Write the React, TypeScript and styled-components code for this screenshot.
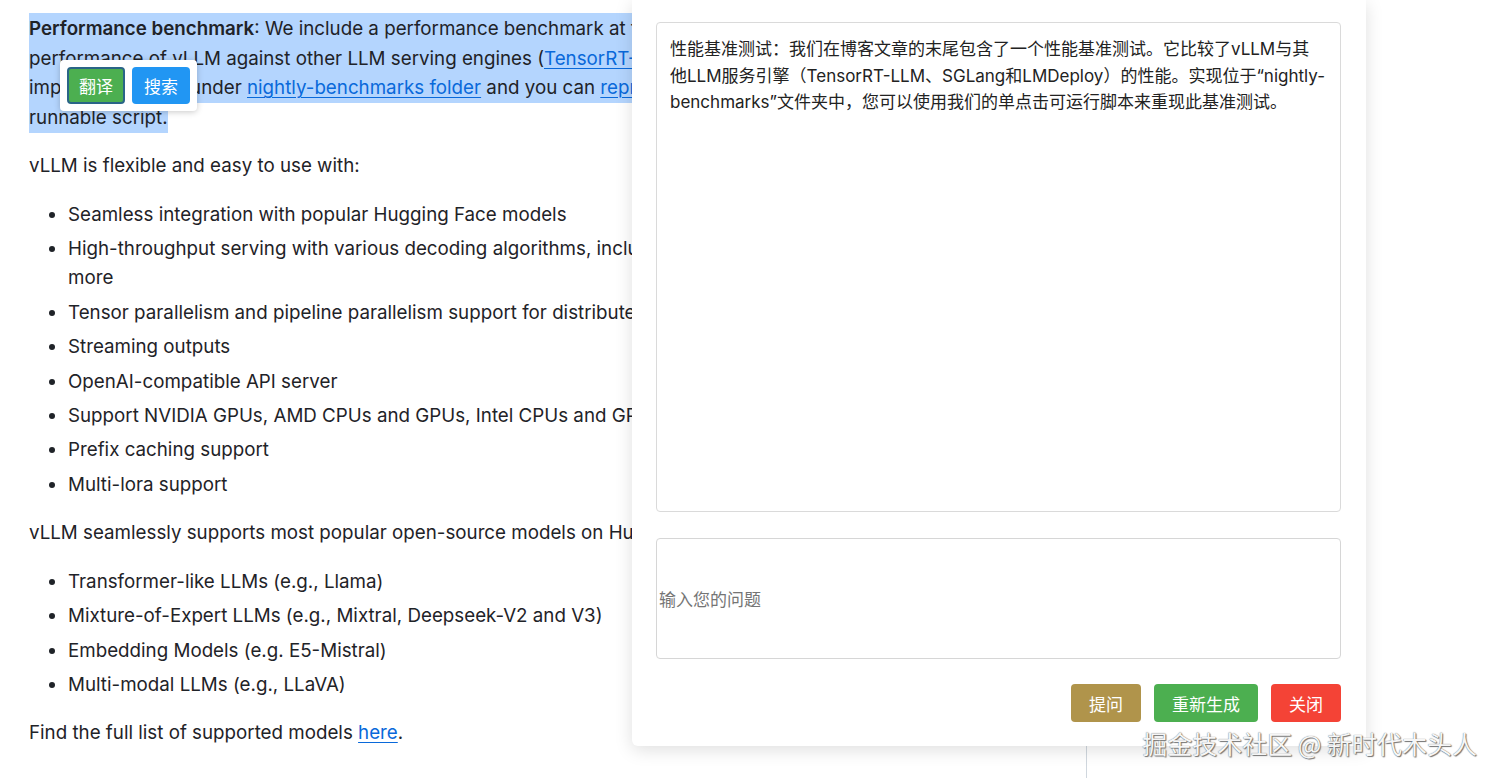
import React from "react";
import styled, { createGlobalStyle } from "styled-components";

const GlobalStyle = createGlobalStyle`
    html, body {
        margin: 0;
        padding: 0;
        background: #ffffff;
    }
    body {
        font-family: Inter, "Noto Sans CJK SC", sans-serif;
        color: #1f2328;
    }
`;

const Page = styled.div`
    display: flex;
    width: 1500px;
    height: 778px;
    overflow: hidden;
    position: relative;
`;

const Article = styled.main`
    box-sizing: border-box;
    width: 1087px;
    height: 778px;
    padding: 14px 0 0 29px;
    border-right: 1px solid #d0d7de;
    overflow: hidden;
    font-size: 18.75px;
    line-height: 29.5px;
    white-space: nowrap;
`;

const Para = styled.p`
    margin: 0 0 19px;
`;

const Selected = styled.span`
    background: #b4d5fe;
    padding: 4px 0;
`;

const Strong = styled.strong`
    font-weight: 600;
`;

const Link = styled.a`
    color: #0969da;
    text-decoration: underline;
    text-underline-offset: 3px;
    text-decoration-thickness: 1px;
`;

const List = styled.ul`
    margin: 0 0 19px;
    padding-left: 39px;
`;

const Item = styled.li`
    & + & {
        margin-top: 4.9px;
    }
`;

const SelectionPopup = styled.div`
    position: absolute;
    left: 60px;
    top: 60px;
    display: flex;
    gap: 7px;
    padding: 7px;
    background: #ffffff;
    border-radius: 4px;
    box-shadow: 0 1px 6px rgba(0, 0, 0, 0.22);
`;

const PopupButton = styled.button<{ $color: string; $focused?: boolean }>`
    box-sizing: border-box;
    width: 58px;
    height: 37px;
    border-radius: 4px;
    border: ${p => (p.$focused ? "2px solid #2a6587" : "none")};
    background: ${p => p.$color};
    color: #ffffff;
    font-family: "Noto Sans CJK SC", sans-serif;
    font-size: 17px;
    cursor: pointer;
`;

const Panel = styled.section`
    position: absolute;
    left: 632px;
    top: 0;
    box-sizing: border-box;
    width: 734px;
    padding: 22px 25px 24px 24px;
    background: #ffffff;
    border-radius: 0 0 6px 6px;
    box-shadow: 0 4px 18px rgba(0, 0, 0, 0.13);
    display: flex;
    flex-direction: column;
`;

const Answer = styled.div`
    box-sizing: border-box;
    height: 490px;
    padding: 13px 13px;
    border: 1px solid #dadada;
    border-radius: 4px;
    font-family: Inter, "Noto Sans CJK SC", sans-serif;
    font-size: 17px;
    line-height: 26.5px;
    color: #222222;
    white-space: nowrap;
`;

const Question = styled.input`
    box-sizing: border-box;
    margin-top: 26px;
    height: 121px;
    padding: 0 2px;
    border: 1px solid #d6d6d6;
    border-radius: 4px;
    font-family: "Noto Sans CJK SC", sans-serif;
    font-size: 17px;
    color: #222222;
    outline: none;
    &::placeholder {
        color: #757575;
    }
`;

const Actions = styled.div`
    margin-top: 25px;
    display: flex;
    justify-content: flex-end;
    gap: 13px;
`;

const ActionButton = styled.button<{ $color: string }>`
    height: 38px;
    padding: 0 18px;
    border: none;
    border-radius: 4px;
    background: ${p => p.$color};
    color: #ffffff;
    font-family: "Noto Sans CJK SC", sans-serif;
    font-size: 17px;
    cursor: pointer;
`;

const Watermark = styled.div`
    position: absolute;
    right: 23px;
    bottom: 22px;
    font-family: "Noto Sans CJK SC", sans-serif;
    font-size: 25px;
    line-height: 1;
    color: #f6f6f6;
    text-shadow: 0 0 1px #555, 1px 1px 1px #777;
    pointer-events: none;
`;

export default function App() {
    return (
        <>
            <GlobalStyle />
            <Page>
                <Article>
                    <Para>
                        <Selected>
                            <Strong>Performance benchmark</Strong>: We include a performance benchmark at the end of{" "}
                            <Link>our blog post</Link>. It compares the
                            <br />
                            performance of vLLM against other LLM serving engines (<Link>TensorRT-LLM</Link>,{" "}
                            <Link>SGLang</Link> and <Link>LMDeploy</Link>). The
                            <br />
                            implementation is under <Link>nightly-benchmarks folder</Link> and you can{" "}
                            <Link>reproduce</Link> this benchmark using our one-click
                            <br />
                            runnable script.
                        </Selected>
                    </Para>
                    <Para>vLLM is flexible and easy to use with:</Para>
                    <List>
                        <Item>Seamless integration with popular Hugging Face models</Item>
                        <Item>
                            High-throughput serving with various decoding algorithms, including <i>parallel sampling</i>,{" "}
                            <i>beam search</i>, and
                            <br />
                            more
                        </Item>
                        <Item>Tensor parallelism and pipeline parallelism support for distributed inference</Item>
                        <Item>Streaming outputs</Item>
                        <Item>OpenAI-compatible API server</Item>
                        <Item>Support NVIDIA GPUs, AMD CPUs and GPUs, Intel CPUs and GPUs, PowerPC CPUs, TPU, and AWS Neuron.</Item>
                        <Item>Prefix caching support</Item>
                        <Item>Multi-lora support</Item>
                    </List>
                    <Para>vLLM seamlessly supports most popular open-source models on HuggingFace, including:</Para>
                    <List>
                        <Item>Transformer-like LLMs (e.g., Llama)</Item>
                        <Item>Mixture-of-Expert LLMs (e.g., Mixtral, Deepseek-V2 and V3)</Item>
                        <Item>Embedding Models (e.g. E5-Mistral)</Item>
                        <Item>Multi-modal LLMs (e.g., LLaVA)</Item>
                    </List>
                    <Para>
                        Find the full list of supported models <Link>here</Link>.
                    </Para>
                </Article>

                <SelectionPopup>
                    <PopupButton $color="#4caf50" $focused>翻译</PopupButton>
                    <PopupButton $color="#2196f3">搜索</PopupButton>
                </SelectionPopup>

                <Panel>
                    <Answer>
                        性能基准测试：我们在博客文章的末尾包含了一个性能基准测试。它比较了vLLM与其
                        <br />
                        他LLM服务引擎（TensorRT-LLM、SGLang和LMDeploy）的性能。实现位于“nightly-
                        <br />
                        benchmarks”文件夹中，您可以使用我们的单点击可运行脚本来重现此基准测试。
                    </Answer>
                    <Question placeholder="输入您的问题" />
                    <Actions>
                        <ActionButton $color="#b0944b">提问</ActionButton>
                        <ActionButton $color="#4caf50">重新生成</ActionButton>
                        <ActionButton $color="#f44336">关闭</ActionButton>
                    </Actions>
                </Panel>

                <Watermark>掘金技术社区 @ 新时代木头人</Watermark>
            </Page>
        </>
    );
}
